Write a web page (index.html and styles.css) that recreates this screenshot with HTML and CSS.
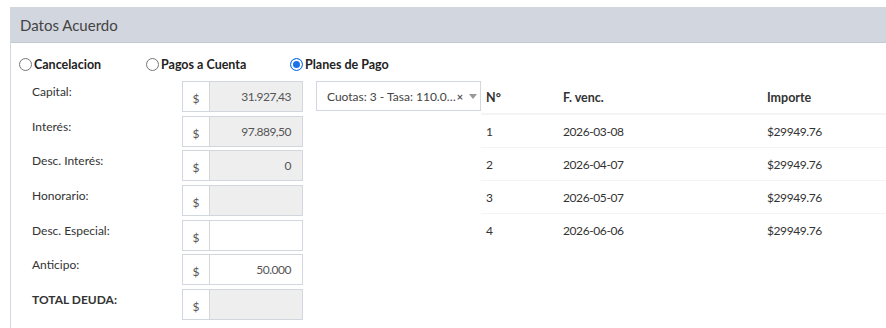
FILE: index.html
```html
<!DOCTYPE html>
<html lang="es">
<head>
<meta charset="utf-8">
<link rel="stylesheet" href="styles.css">
</head>
<body>
<div class="box">
  <div class="box-header"><h3 class="box-title">Datos Acuerdo</h3></div>
  <div class="box-body">
    <div class="radios">
      <label class="radio r1"><span class="dot"></span>Cancelacion</label>
      <label class="radio r2"><span class="dot"></span>Pagos a Cuenta</label>
      <label class="radio r3"><span class="dot checked"></span>Planes de Pago</label>
    </div>
    <div class="main">
      <div class="fields">
        <div class="row"><span class="lbl">Capital:</span><div class="ig"><span class="addon">$</span><span class="inp ro">31.927,43</span></div></div>
        <div class="row"><span class="lbl">Interés:</span><div class="ig"><span class="addon">$</span><span class="inp ro">97.889,50</span></div></div>
        <div class="row"><span class="lbl">Desc. Interés:</span><div class="ig"><span class="addon">$</span><span class="inp ro">0</span></div></div>
        <div class="row"><span class="lbl">Honorario:</span><div class="ig"><span class="addon">$</span><span class="inp ro"></span></div></div>
        <div class="row"><span class="lbl">Desc. Especial:</span><div class="ig"><span class="addon">$</span><span class="inp"></span></div></div>
        <div class="row"><span class="lbl">Anticipo:</span><div class="ig"><span class="addon">$</span><span class="inp">50.000</span></div></div>
        <div class="row"><span class="lbl bold">TOTAL DEUDA:</span><div class="ig"><span class="addon">$</span><span class="inp ro"></span></div></div>
      </div>
      <div class="select"><span class="sel-text">Cuotas: 3 - Tasa: 110.0…</span><span class="clear">×</span><span class="arrow"></span></div>
      <table class="plan">
        <thead><tr><th class="c1">N°</th><th class="c2">F. venc.</th><th class="c3">Importe</th></tr></thead>
        <tbody>
          <tr><td>1</td><td>2026-03-08</td><td>$29949.76</td></tr>
          <tr><td>2</td><td>2026-04-07</td><td>$29949.76</td></tr>
          <tr><td>3</td><td>2026-05-07</td><td>$29949.76</td></tr>
          <tr><td>4</td><td>2026-06-06</td><td>$29949.76</td></tr>
        </tbody>
      </table>
    </div>
  </div>
</div>
</body>
</html>
```
FILE: styles.css
```css
html, body { margin: 0; padding: 0; background: #fff; }
body { font-family: "Lato", "Open Sans", sans-serif; color: #333; font-size: 12px; }
.box { margin: 7px 0 0 10px; border-left: 1px solid #d2d6de; height: 330px; }
.box-header { background: #d2d6de; height: 35px; border-bottom: 1px solid #c4c8cf; display: flex; align-items: center; padding-left: 9px; }
.box-title { margin: 0; font-size: 15px; font-weight: 400; color: #444; }
.box-body { padding: 12px 0 0 8px; }
.radios { display: flex; align-items: center; height: 18px; }
.radio { display: flex; align-items: center; font-weight: 700; font-size: 12.5px; color: #222; }
.r1 { width: 127px; }
.r2 { width: 144px; }
.dot { width: 13px; height: 13px; border: 1px solid #767676; border-radius: 50%; margin-right: 2px; box-sizing: border-box; }
.dot.checked { border: 1px solid #1a73e8; background: #1a73e8; box-shadow: inset 0 0 0 2px #fff; }
.main { display: flex; align-items: flex-start; margin-top: 8px; }
.fields { display: flex; flex-direction: column; gap: 3.7px; width: 284px; }
.row { display: flex; align-items: flex-start; height: 31px; }
.lbl { width: 163px; padding-left: 13px; padding-top: 3px; box-sizing: border-box; }
.lbl.bold { font-weight: 700; }
.ig { display: flex; width: 121px; height: 31px; box-sizing: border-box; }
.addon { width: 28px; border: 1px solid #d2d6de; background: #fff; display: flex; align-items: center; justify-content: center; box-sizing: border-box; padding-top: 4px; color: #555; }
.inp { flex: 1; border: 1px solid #d2d6de; border-left: 0; background: #fff; display: flex; align-items: center; justify-content: flex-end; padding-right: 11px; box-sizing: border-box; color: #555; letter-spacing: -0.5px; }
.inp.ro { background: #eee; }
.select { margin-left: 13px; width: 165px; height: 30px; border: 1px solid #d2d6de; box-sizing: border-box; display: flex; align-items: center; padding-left: 10px; color: #444; }
.sel-text { white-space: nowrap; }
.clear { font-size: 11px; font-weight: 700; margin-left: 1px; color: #555; }
.arrow { margin-left: 6px; width: 0; height: 0; border-left: 4px solid transparent; border-right: 4px solid transparent; border-top: 5px solid #999; }
.plan { border-collapse: collapse; flex: 1; margin-top: 0; }
.plan th { text-align: left; font-weight: 700; font-size: 12.5px; height: 32px; border-bottom: 2px solid #f4f4f4; padding: 0 5px; }
.plan td { height: 32px; border-top: 1px solid #f4f4f4; padding: 0 5px; letter-spacing: -0.4px; }
.plan tbody tr:first-child td { border-top: 0; }
.c1 { width: 67px; }
.c2 { width: 194px; }
```
